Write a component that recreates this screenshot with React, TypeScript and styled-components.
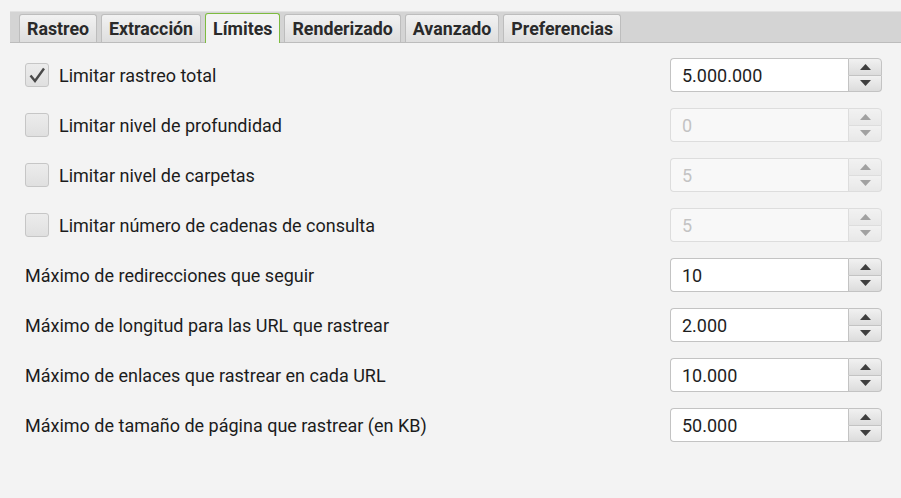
import React from "react";
import styled, { createGlobalStyle, css } from "styled-components";

const Global = createGlobalStyle`
  html, body { margin: 0; padding: 0; background: #f3f3f3; }
  body { font-family: Roboto, "Liberation Sans", sans-serif; color: #1f1f1f; }
`;

const Page = styled.div`
  width: 901px;
  height: 498px;
  padding-top: 11px;
  box-sizing: border-box;
  background: #f3f3f3;
`;

const TabBar = styled.div`
  margin-left: 10px;
  height: 32px;
  box-sizing: border-box;
  display: flex;
  align-items: flex-end;
  gap: 4px;
  padding-left: 9px;
  background: #d4d4d4;
  border-top: 1px solid #e2e2e2;
  border-bottom: 1px solid #bcbcbc;
`;

const Tab = styled.div<{ $active?: boolean }>`
  height: 28px;
  box-sizing: border-box;
  padding: 0 7px;
  display: flex;
  align-items: center;
  font-size: 17.8px;
  font-weight: 700;
  color: #2a2a2a;
  border: 1px solid #bdbdbd;
  border-bottom: none;
  border-radius: 3px 3px 0 0;
  background: linear-gradient(#f2f2f2, #dedede);
  ${(p) =>
    p.$active &&
    css`
      height: 30px;
      margin-bottom: -1px;
      border: 1px solid #7dbb3f;
      border-bottom: none;
      background: #f3f3f3;
    `}
`;

const Content = styled.div`
  padding: 7px 19px 0 25px;
`;

const Row = styled.div`
  height: 50px;
  display: flex;
  align-items: center;
  justify-content: space-between;
`;

const LabelWrap = styled.label`
  display: flex;
  align-items: center;
  gap: 10px;
  font-size: 18px;
  color: #1c1c1c;
`;

const Box = styled.span`
  width: 24px;
  height: 24px;
  box-sizing: border-box;
  border: 1px solid #c6c6c6;
  border-radius: 3px;
  background: linear-gradient(#ececec, #e0e0e0);
  display: flex;
  align-items: center;
  justify-content: center;
`;

const Spinner = styled.div<{ $disabled?: boolean }>`
  width: 212px;
  height: 34px;
  display: flex;
  opacity: ${(p) => (p.$disabled ? 0.45 : 1)};
`;

const Field = styled.div<{ $disabled?: boolean }>`
  flex: 1;
  box-sizing: border-box;
  border: 1px solid #c3c3c3;
  border-right: none;
  border-radius: 4px 0 0 4px;
  background: #fff;
  padding-left: 11px;
  display: flex;
  align-items: center;
  font-size: 18px;
  color: #1e1e1e;
  ${(p) =>
    p.$disabled &&
    css`
      color: #8a8a8a;
    `}
`;

const Buttons = styled.div`
  width: 34px;
  display: flex;
  flex-direction: column;
`;

const StepBtn = styled.div<{ $pos: "up" | "down" }>`
  flex: 1;
  box-sizing: border-box;
  border: 1px solid #c3c3c3;
  background: linear-gradient(#f1f1f1, #dcdcdc);
  display: flex;
  align-items: center;
  justify-content: center;
  border-radius: ${(p) => (p.$pos === "up" ? "0 4px 0 0" : "0 0 4px 0")};
  ${(p) => p.$pos === "down" && "border-top: none;"}
`;

const Arrow = ({ dir }: { dir: "up" | "down" }) => (
  <svg width="11" height="6" viewBox="0 0 11 6">
    {dir === "up" ? (
      <polygon points="0,6 11,6 5.5,0" fill="#3f3f3f" />
    ) : (
      <polygon points="0,0 11,0 5.5,6" fill="#3f3f3f" />
    )}
  </svg>
);

const Check = () => (
  <svg width="18" height="18" viewBox="0 0 18 18">
    <path d="M2.5 9.5 L7 15 L16 2.5" fill="none" stroke="#4a4a4a" strokeWidth="2.4" strokeLinejoin="miter" />
  </svg>
);

const NumberSpinner = ({ value, disabled }: { value: string; disabled?: boolean }) => (
  <Spinner $disabled={disabled}>
    <Field $disabled={disabled}>{value}</Field>
    <Buttons>
      <StepBtn $pos="up">
        <Arrow dir="up" />
      </StepBtn>
      <StepBtn $pos="down">
        <Arrow dir="down" />
      </StepBtn>
    </Buttons>
  </Spinner>
);

const tabs = ["Rastreo", "Extracción", "Límites", "Renderizado", "Avanzado", "Preferencias"];

const rows: { label: string; value: string; checkbox?: boolean; checked?: boolean; disabled?: boolean }[] = [
  { label: "Limitar rastreo total", value: "5.000.000", checkbox: true, checked: true },
  { label: "Limitar nivel de profundidad", value: "0", checkbox: true, disabled: true },
  { label: "Limitar nivel de carpetas", value: "5", checkbox: true, disabled: true },
  { label: "Limitar número de cadenas de consulta", value: "5", checkbox: true, disabled: true },
  { label: "Máximo de redirecciones que seguir", value: "10" },
  { label: "Máximo de longitud para las URL que rastrear", value: "2.000" },
  { label: "Máximo de enlaces que rastrear en cada URL", value: "10.000" },
  { label: "Máximo de tamaño de página que rastrear (en KB)", value: "50.000" },
];

export default function App() {
  return (
    <Page>
      <Global />
      <TabBar>
        {tabs.map((t) => (
          <Tab key={t} $active={t === "Límites"}>
            {t}
          </Tab>
        ))}
      </TabBar>
      <Content>
        {rows.map((r) => (
          <Row key={r.label}>
            <LabelWrap>
              {r.checkbox && <Box>{r.checked && <Check />}</Box>}
              {r.label}
            </LabelWrap>
            <NumberSpinner value={r.value} disabled={r.disabled} />
          </Row>
        ))}
      </Content>
    </Page>
  );
}
